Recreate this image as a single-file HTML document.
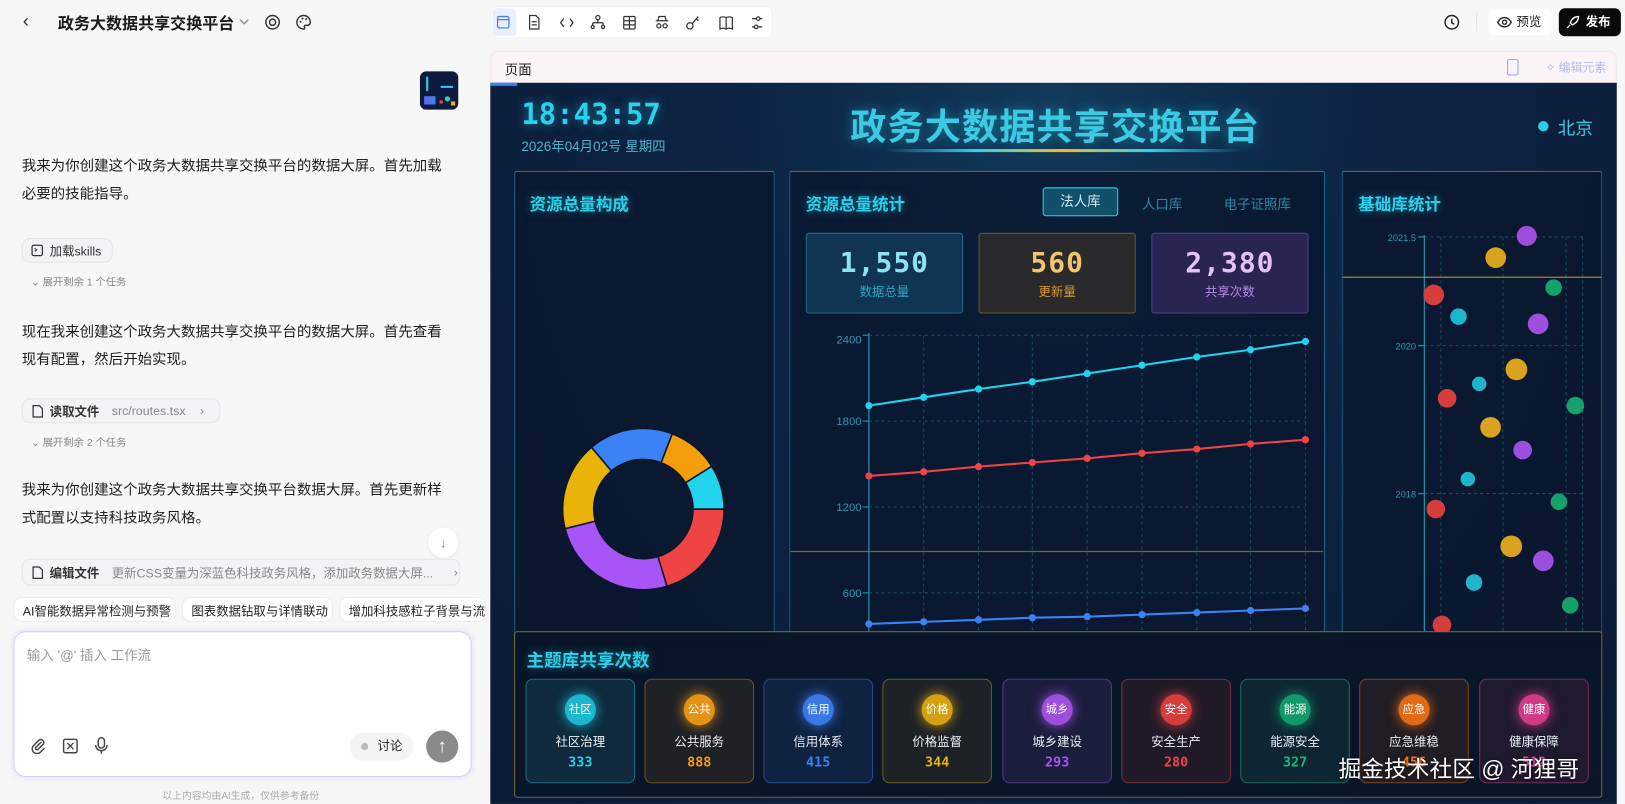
<!DOCTYPE html>
<html><head><meta charset="utf-8">
<style>
*{margin:0;padding:0;box-sizing:border-box}
html,body{width:1625px;height:804px;overflow:hidden;background:#f7f7f8;font-family:"Liberation Sans","Noto Sans CJK SC",sans-serif}
#c{position:absolute;left:0;top:0;width:1571px;height:777px;transform:scale(1.0344,1.0347);transform-origin:0 0}
.a{position:absolute;white-space:nowrap}
.p{font-size:14px;color:#1f1f1f;line-height:27px;left:21px;width:412px;white-space:normal}
.chip{position:absolute;height:24px;border:1px solid #e6e6e8;background:#f3f3f5;border-radius:8px;font-size:12px;color:#333;display:flex;align-items:center;padding-left:8px;gap:6px;white-space:nowrap;overflow:hidden}
.sub{font-size:10px;color:#888;position:absolute}
.sg{position:absolute;top:577px;height:24px;border:1px solid #ececec;background:#fff;border-radius:8px;font-size:12px;color:#222;padding:4px 8px;white-space:nowrap;overflow:hidden}
.pan{position:absolute;border:1px solid rgba(34,211,238,.45);border-top-color:rgba(202,160,60,.7);background:rgba(9,22,44,.75);border-radius:3px}
.pt{position:absolute;font-size:16px;font-weight:bold;color:#2bd0ea;text-shadow:0 0 8px rgba(34,211,238,.5)}
.sb{position:absolute;top:225px;width:152px;height:78px;border-radius:3px;text-align:center}
.sb b{display:block;font-family:"DejaVu Sans Mono","Liberation Mono",monospace;font-size:27px;margin-top:13px;letter-spacing:1px}
.sb span{display:block;font-size:12px;margin-top:3px}
.cd{position:absolute;top:656px;width:106px;height:101px;border-radius:7px;text-align:center}
.cd i{display:block;width:30px;height:30px;border-radius:50%;margin:14px auto 0;font-style:normal;font-size:11px;color:#fff;line-height:30px}
.cd s{display:block;text-decoration:none;font-size:12px;color:#e8eef5;margin-top:7px}
.cd b{display:block;font-family:"DejaVu Sans Mono",monospace;font-size:13px;margin-top:5px}
</style></head><body><div id="c">

<!-- LEFT -->
<div class="a" style="left:22px;top:10px;font-size:18px;color:#333">‹</div>
<div class="a" style="left:56px;top:11px;font-size:15.5px;font-weight:bold;color:#1a1a1a">政务大数据共享交换平台</div>
<svg class="a" style="left:230px;top:16px" width="12" height="10"><path d="M2 3l4 4 4-4" stroke="#888" fill="none" stroke-width="1.3"/></svg>
<svg class="a" style="left:255px;top:13px" width="17" height="17"><circle cx="8.5" cy="8.5" r="6.5" stroke="#333" fill="none" stroke-width="1.4"/><circle cx="8.5" cy="8.5" r="3" stroke="#333" fill="none" stroke-width="1.4"/></svg>
<svg class="a" style="left:285px;top:13px" width="17" height="17"><path d="M8.5 2a6.5 6.5 0 1 0 0 13c1.2 0 1.3-1 .8-1.7-.6-.8 0-1.8 1-1.8H12a3 3 0 0 0 3-3C15 4.8 12 2 8.5 2z" stroke="#333" fill="none" stroke-width="1.4"/><circle cx="5.5" cy="8" r="1" fill="#333"/><circle cx="7.5" cy="5" r="1" fill="#333"/><circle cx="11" cy="5.5" r="1" fill="#333"/></svg>
<div class="a" style="left:406px;top:69px;width:37px;height:37px;border-radius:6px;background:#0c1a3d;overflow:hidden">
<div class="a" style="left:6px;top:5px;width:2px;height:14px;background:#2bd0ea"></div><div class="a" style="left:20px;top:8px;width:12px;height:8px;border-bottom:2px solid #38bdf8"></div><div class="a" style="left:4px;top:24px;width:11px;height:8px;background:linear-gradient(90deg,#6366f1,#3b82f6)"></div><div class="a" style="left:24px;top:24px;width:5px;height:5px;border-radius:50%;background:#2dd4bf"></div><div class="a" style="left:19px;top:28px;width:3px;height:3px;background:#ef4444"></div><div class="a" style="left:30px;top:29px;width:4px;height:4px;background:#eab308"></div></div>

<div class="a p" style="top:147px">我来为你创建这个政务大数据共享交换平台的数据大屏。首先加载必要的技能指导。</div>
<div class="chip" style="left:21px;top:230px;width:88px"><svg width="12" height="12"><rect x="1" y="1" width="10" height="10" rx="1.5" stroke="#333" fill="none" stroke-width="1.2"/><path d="M3.5 4l2 1.5-2 1.5" stroke="#333" fill="none"/></svg>加载skills</div>
<div class="sub" style="left:30px;top:264px">⌄ 展开剩余 1 个任务</div>
<div class="a p" style="top:307px">现在我来创建这个政务大数据共享交换平台的数据大屏。首先查看现有配置，然后开始实现。</div>
<div class="chip" style="left:21px;top:385px;width:192px"><svg width="12" height="13"><path d="M2 1h6l3 3v8H2z" stroke="#333" fill="none" stroke-width="1.2"/></svg><b style="font-weight:bold">读取文件</b><span style="color:#888;margin-left:6px">src/routes.tsx</span><span style="margin-left:8px;color:#888">›</span></div>
<div class="sub" style="left:30px;top:419px">⌄ 展开剩余 2 个任务</div>
<div class="a p" style="top:460px">我来为你创建这个政务大数据共享交换平台数据大屏。首先更新样式配置以支持科技政务风格。</div>
<div class="a" style="left:414px;top:510px;width:29px;height:29px;border-radius:50%;background:#fff;box-shadow:0 1px 4px rgba(0,0,0,.08);text-align:center;line-height:28px;color:#999;font-size:14px">↓</div>
<div class="chip" style="left:21px;top:540px;width:424px;height:26px"><svg width="12" height="13" style="flex:none"><path d="M2 1h6l3 3v8H2z" stroke="#333" fill="none" stroke-width="1.2"/></svg><b style="flex:none">编辑文件</b><span style="color:#888;margin-left:6px;flex:none">更新CSS变量为深蓝色科技政务风格，添加政务数据大屏...</span><span style="margin-left:14px;color:#888;flex:none">›</span></div>
<div class="sg" style="left:13px;width:157px">AI智能数据异常检测与预警</div>
<div class="sg" style="left:176px;width:146px">图表数据钻取与详情联动</div>
<div class="sg" style="left:328px;width:142px">增加科技感粒子背景与流动</div>
<div class="a" style="left:13px;top:610px;width:443px;height:141px;border-radius:12px;background:#fff;border:1.5px solid #d9ccf5;box-shadow:0 0 6px rgba(180,160,240,.3)"></div>
<div class="a" style="left:26px;top:623px;font-size:13px;color:#999">输入 '@' 插入 工作流</div>
<svg class="a" style="left:29px;top:713px" width="16" height="16"><path d="M11 4l-5.5 5.5a1.5 1.5 0 0 0 2 2L13 6a3 3 0 0 0-4-4L3.5 7.5a4.5 4.5 0 0 0 6.5 6.5L14 10" stroke="#444" fill="none" stroke-width="1.4"/></svg>
<svg class="a" style="left:60px;top:713px" width="16" height="16"><rect x="1.5" y="1.5" width="13" height="13" rx="1.5" stroke="#444" fill="none" stroke-width="1.4"/><path d="M5 5l6 6M11 5l-6 6" stroke="#444" stroke-width="1.3"/></svg>
<svg class="a" style="left:91px;top:712px" width="14" height="18"><rect x="4" y="1" width="6" height="10" rx="3" stroke="#444" fill="none" stroke-width="1.4"/><path d="M1.5 8a5.5 5.5 0 0 0 11 0M7 13.5v3" stroke="#444" fill="none" stroke-width="1.4"/></svg>
<div class="a" style="left:338px;top:708px;width:62px;height:27px;border-radius:14px;background:#f4f4f5;font-size:12px;color:#222;line-height:27px;padding-left:27px">讨论</div>
<div class="a" style="left:349px;top:718px;width:7px;height:7px;border-radius:50%;background:#bbb"></div>
<div class="a" style="left:412px;top:706px;width:31px;height:31px;border-radius:50%;background:#8a8a8a;color:#fff;text-align:center;line-height:30px;font-size:18px">↑</div>
<div class="a" style="left:157px;top:761px;font-size:9.5px;color:#aaa">以上内容均由AI生成，仅供参考备份</div>

<!-- TOOLBAR -->
<div class="a" style="left:474px;top:6px;width:273px;height:31px;background:#fff;border-radius:6px;border:1px solid #f0f0f0"></div>
<div class="a" style="left:476px;top:8px;width:23px;height:27px;background:#e9effc;border-radius:4px"></div>
<svg class="a" style="left:474px;top:6px" width="273" height="31" fill="none" stroke="#333" stroke-width="1.2">
<rect x="7" y="10" width="11" height="11" rx="1.5" stroke="#4a7bf0"/><path d="M7 13h11" stroke="#4a7bf0"/>
<path d="M38 9h6l3 3v10h-9z M40 15h5M40 18h5"/>
<path d="M71 12l-3 4 3 4M77 12l3 4-3 4"/>
<circle cx="104" cy="11" r="2"/><path d="M104 13v3M99 16h10M99 16v3M109 16v3"/><circle cx="99" cy="20" r="1.5"/><circle cx="109" cy="20" r="1.5"/>
<rect x="129" y="10" width="11" height="12" rx="1"/><path d="M129 14h11M129 18h11M134.5 10v12"/>
<path d="M160 14h12M162 14l1-4h6l1 4"/><circle cx="163" cy="19" r="2"/><circle cx="169" cy="19" r="2"/>
<circle cx="193" cy="19" r="3"/><path d="M195 17l6-7M199 12l2 2"/>
<path d="M222 11c2-1 4-1 6 0v11c-2-1-4-1-6 0zM228 11c2-1 4-1 6 0v11c-2-1-4-1-6 0z"/>
<path d="M253 12h4M261 12h2M253 20h2M259 20h4"/><circle cx="259" cy="12" r="1.7"/><circle cx="257" cy="20" r="1.7"/>
</svg>
<svg class="a" style="left:1395px;top:13px" width="17" height="17"><circle cx="8.5" cy="8.5" r="6.5" stroke="#222" fill="none" stroke-width="1.4"/><path d="M8.5 5v4l2.5 1.5" stroke="#222" fill="none" stroke-width="1.4"/></svg>
<div class="a" style="left:1427px;top:12px;width:1px;height:18px;background:#e5e5e5"></div>
<div class="a" style="left:1439px;top:9px;width:61px;height:25px;background:#fff;border-radius:6px;font-size:12px;color:#222;line-height:25px;padding-left:27px">预览</div>
<svg class="a" style="left:1447px;top:15px" width="15" height="13"><path d="M1 6.5C3 3 5 2 7.5 2S12 3 14 6.5C12 10 10 11 7.5 11S3 10 1 6.5z" stroke="#222" fill="none" stroke-width="1.3"/><circle cx="7.5" cy="6.5" r="2" stroke="#222" fill="none" stroke-width="1.3"/></svg>
<div class="a" style="left:1507px;top:8px;width:60px;height:27px;background:#0a0a0a;border-radius:6px;font-size:12px;color:#fff;line-height:27px;padding-left:26px;font-weight:bold">发布</div>
<svg class="a" style="left:1513px;top:14px" width="15" height="15"><path d="M5 10l-3 3M5 8c2-5 5-6 8-6 0 3-1 6-6 8z" stroke="#fff" fill="none" stroke-width="1.3"/></svg>

<!-- PREVIEW -->
<div class="a" style="left:474px;top:49px;width:1089px;height:32px;background:#fbf5f7;border:1px solid #f0eaee;border-radius:8px 8px 0 0"></div>
<div class="a" style="left:488px;top:57px;font-size:13px;color:#222">页面</div>
<div class="a" style="left:1457px;top:57px;width:11px;height:16px;border:1.4px solid #8ea4f5;border-radius:2px"></div>
<div class="a" style="left:1494px;top:57px;font-size:11.5px;color:#b4b8f0">✧ 编辑元素</div>

<div class="a" style="left:474px;top:80px;width:1089px;height:697px;overflow:hidden;background:radial-gradient(ellipse at 50% 0%,#123a5a 0%,#0d2444 40%,#0b1a35 100%)">
<div class="a" style="left:0;top:0;width:26px;height:3px;background:#3b82f6"></div>
</div>
<div class="a" style="left:504px;top:94px;font-family:'DejaVu Sans Mono',monospace;font-weight:bold;font-size:28px;color:#2bd0ea;text-shadow:0 0 10px rgba(34,211,238,.5)">18:43:57</div>
<div class="a" style="left:504px;top:131px;font-size:13px;color:#4fb2c8">2026年04月02号 星期四</div>
<div class="a" style="left:822px;top:95px;font-size:35px;font-weight:bold;color:#3cc9e3;letter-spacing:1px;text-shadow:0 0 12px rgba(34,211,238,.45)">政务大数据共享交换平台</div>
<div class="a" style="left:855px;top:144px;width:345px;height:3px;border-radius:2px;background:linear-gradient(90deg,transparent,#2bd0ea 25%,#f5b82e 50%,#2bd0ea 75%,transparent)"></div>
<div class="a" style="left:1487px;top:117px;width:10px;height:10px;border-radius:50%;background:#2bd0ea"></div>
<div class="a" style="left:1506px;top:110px;font-size:17px;color:#3cc9e3">北京</div>

<div class="pan" style="left:497px;top:165px;width:252px;height:460px"></div>
<div class="pt" style="left:512px;top:184px">资源总量构成</div>
<div class="pan" style="left:763px;top:165px;width:518px;height:460px"></div>
<div class="pt" style="left:779px;top:184px">资源总量统计</div>
<div class="a" style="left:1008px;top:181px;width:73px;height:28px;border:1px solid #2bd0ea;background:#12506a;border-radius:3px;color:#cdeff7;font-size:13px;text-align:center;line-height:26px">法人库</div>
<div class="a" style="left:1104px;top:187px;font-size:13px;color:#2a8aa6">人口库</div>
<div class="a" style="left:1183px;top:187px;font-size:13px;color:#2a8aa6">电子证照库</div>
<div class="sb" style="left:779px;background:#0f3552;border:1px solid #1f6a88"><b style="color:#8ee3f2">1,550</b><span style="color:#2fa5c2">数据总量</span></div>
<div class="sb" style="left:946px;background:#2a2a2c;border:1px solid #6a5630"><b style="color:#f3c46a">560</b><span style="color:#d99a2b">更新量</span></div>
<div class="sb" style="left:1113px;background:#2a2450;border:1px solid #4e3d86"><b style="color:#e3c2f7">2,380</b><span style="color:#b48ae6">共享次数</span></div>
<div class="pan" style="left:1297px;top:165px;width:252px;height:460px"></div>
<div class="pt" style="left:1313px;top:184px">基础库统计</div>

<svg class="a" style="left:0;top:0" width="1571" height="777">
<g stroke="#0b1628" stroke-width="1.5">
<path d="M700 492A78 78 0 0 1 644.8 566.6L636 537.9A48 48 0 0 0 670 492Z" fill="#ef4444"/>
<path d="M644.8 566.6A78 78 0 0 1 546.3 510.9L575.4 503.6A48 48 0 0 0 636 537.9Z" fill="#a855f7"/>
<path d="M546.3 510.9A78 78 0 0 1 571.9 432.3L591.1 455.2A48 48 0 0 0 575.4 503.6Z" fill="#eab308"/>
<path d="M571.9 432.3A78 78 0 0 1 649.9 419.2L639.2 447.2A48 48 0 0 0 591.1 455.2Z" fill="#3b82f6"/>
<path d="M649.9 419.2A78 78 0 0 1 688.1 450.7L662.7 466.6A48 48 0 0 0 639.2 447.2Z" fill="#f59e0b"/>
<path d="M688.1 450.7A78 78 0 0 1 700 492L670 492A48 48 0 0 0 662.7 466.6Z" fill="#22d3ee"/>
</g>
<g stroke="#1f4a66" stroke-dasharray="3 3" stroke-width="1">
<path d="M840 324H1262M840 407H1262M840 490H1262M840 573H1262M893 324V610M946 324V610M998 324V610M1051 324V610M1104 324V610M1157 324V610M1209 324V610M1262 324V610"/>
<path d="M1377 229H1530M1377 334H1530M1377 477H1530M1393 229V610M1453 229V610M1514 229V610M1530 229V610"/>
</g>
<path d="M840 322V610M834 324H840M834 407H840M834 490H840M834 573H840" stroke="#1c8aa0" stroke-width="1.3"/>
<path d="M1377 227V610M1371 229H1377M1371 334H1377M1371 477H1377" stroke="#1c8aa0" stroke-width="1.3"/>
<path d="M764 533H1279" stroke="#8a7a3a" stroke-width="1.2" opacity=".8"/>
<path d="M1298 268H1548" stroke="#b29436" stroke-width="1.2" opacity=".9"/>
<g font-size="11" fill="#2a9ab3" text-anchor="end" font-family="Liberation Sans">
<text x="833" y="332">2400</text><text x="833" y="411">1800</text><text x="833" y="494">1200</text><text x="833" y="577">600</text>
<text x="1369" y="233" font-size="9">2021.5</text><text x="1369" y="338" font-size="9">2020</text><text x="1369" y="481" font-size="9">2018</text>
</g>
<polyline points="840,392 893,384 946,376 998,369 1051,361 1104,353 1157,345 1209,338 1262,330" fill="none" stroke="#22d3ee" stroke-width="2"/>
<polyline points="840,460 893,456 946,451 998,447 1051,443 1104,438 1157,434 1209,429 1262,425" fill="none" stroke="#ef4444" stroke-width="2"/>
<polyline points="840,603 893,601 946,599 998,597 1051,596 1104,594 1157,592 1209,590 1262,588" fill="none" stroke="#3b82f6" stroke-width="2"/>
<g fill="#22d3ee"><circle cx="840" cy="392" r="3.5"/><circle cx="893" cy="384" r="3.5"/><circle cx="946" cy="376" r="3.5"/><circle cx="998" cy="369" r="3.5"/><circle cx="1051" cy="361" r="3.5"/><circle cx="1104" cy="353" r="3.5"/><circle cx="1157" cy="345" r="3.5"/><circle cx="1209" cy="338" r="3.5"/><circle cx="1262" cy="330" r="3.5"/></g>
<g fill="#ef4444"><circle cx="840" cy="460" r="3.5"/><circle cx="893" cy="456" r="3.5"/><circle cx="946" cy="451" r="3.5"/><circle cx="998" cy="447" r="3.5"/><circle cx="1051" cy="443" r="3.5"/><circle cx="1104" cy="438" r="3.5"/><circle cx="1157" cy="434" r="3.5"/><circle cx="1209" cy="429" r="3.5"/><circle cx="1262" cy="425" r="3.5"/></g>
<g fill="#3b82f6"><circle cx="840" cy="603" r="3.5"/><circle cx="893" cy="601" r="3.5"/><circle cx="946" cy="599" r="3.5"/><circle cx="998" cy="597" r="3.5"/><circle cx="1051" cy="596" r="3.5"/><circle cx="1104" cy="594" r="3.5"/><circle cx="1157" cy="592" r="3.5"/><circle cx="1209" cy="590" r="3.5"/><circle cx="1262" cy="588" r="3.5"/></g>
<g>
<circle cx="1476" cy="228" r="9.7" fill="#9b4fdc"/><circle cx="1446" cy="249" r="10" fill="#d9a21f"/><circle cx="1502" cy="278" r="8" fill="#16a06e"/>
<circle cx="1386" cy="285" r="10" fill="#d63d3d"/><circle cx="1410" cy="306" r="8" fill="#1fb5cc"/><circle cx="1487" cy="313" r="10" fill="#9b4fdc"/>
<circle cx="1466" cy="357" r="10.5" fill="#d9a21f"/><circle cx="1430" cy="371" r="7" fill="#1fb5cc"/><circle cx="1399" cy="385" r="9" fill="#d63d3d"/>
<circle cx="1523" cy="392" r="8.5" fill="#16a06e"/><circle cx="1441" cy="413" r="10" fill="#d9a21f"/><circle cx="1472" cy="435" r="9" fill="#9b4fdc"/>
<circle cx="1419" cy="463" r="7" fill="#1fb5cc"/><circle cx="1507" cy="485" r="8" fill="#16a06e"/><circle cx="1388" cy="492" r="9" fill="#d63d3d"/>
<circle cx="1461" cy="528" r="10.5" fill="#d9a21f"/><circle cx="1492" cy="542" r="10" fill="#9b4fdc"/><circle cx="1425" cy="563" r="8" fill="#1fb5cc"/>
<circle cx="1518" cy="585" r="8" fill="#16a06e"/><circle cx="1394" cy="604" r="9" fill="#d63d3d"/>
</g>
</svg>

<div class="pan" style="left:497px;top:610px;width:1052px;height:161px;background:rgba(9,21,40,.96);border-color:rgba(202,170,70,.55)"></div>
<div class="pt" style="left:509px;top:624px;font-size:17px">主题库共享次数</div>
<div class="cd" style="left:508px;border:1px solid #1b6d80;background:#0e2a3c"><i style="background:#1cb6cf;box-shadow:0 0 12px #1cb6cf">社区</i><s>社区治理</s><b style="color:#22d3ee">333</b></div>
<div class="cd" style="left:623px;border:1px solid #6e5020;background:#1f2126"><i style="background:#e39316;box-shadow:0 0 12px #e39316">公共</i><s>公共服务</s><b style="color:#f59e0b">888</b></div>
<div class="cd" style="left:738px;border:1px solid #234a8a;background:#0f2240"><i style="background:#3a78e6;box-shadow:0 0 12px #3a78e6">信用</i><s>信用体系</s><b style="color:#3b82f6">415</b></div>
<div class="cd" style="left:853px;border:1px solid #6a5a20;background:#1d2226"><i style="background:#d4a211;box-shadow:0 0 12px #d4a211">价格</i><s>价格监督</s><b style="color:#eab308">344</b></div>
<div class="cd" style="left:969px;border:1px solid #55348a;background:#1b1d3c"><i style="background:#9b4fdc;box-shadow:0 0 12px #9b4fdc">城乡</i><s>城乡建设</s><b style="color:#a855f7">293</b></div>
<div class="cd" style="left:1084px;border:1px solid #7a2c34;background:#201a28"><i style="background:#d63d3d;box-shadow:0 0 12px #d63d3d">安全</i><s>安全生产</s><b style="color:#ef4444">280</b></div>
<div class="cd" style="left:1199px;border:1px solid #1a6a55;background:#0e2632"><i style="background:#129a6b;box-shadow:0 0 12px #129a6b">能源</i><s>能源安全</s><b style="color:#10b981">327</b></div>
<div class="cd" style="left:1314px;border:1px solid #7a4420;background:#201d24"><i style="background:#e26a14;box-shadow:0 0 12px #e26a14">应急</i><s>应急维稳</s><b style="color:#f97316">456</b></div>
<div class="cd" style="left:1430px;border:1px solid #7a2c5c;background:#1f1a30"><i style="background:#d03b86;box-shadow:0 0 12px #d03b86">健康</i><s>健康保障</s><b style="color:#ec4899">512</b></div>
<div class="a" style="left:1294px;top:726px;font-size:22px;color:#fff;text-shadow:0 0 3px rgba(0,0,0,.6)">掘金技术社区 @ 河狸哥</div>
</div></body></html>
